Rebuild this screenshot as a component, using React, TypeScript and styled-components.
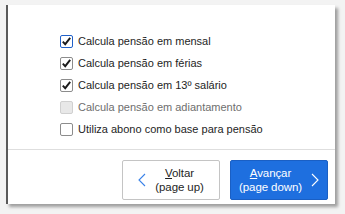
import React from 'react';
import styled, { createGlobalStyle } from 'styled-components';

const GlobalStyle = createGlobalStyle`
    html, body {
        margin: 0;
        padding: 0;
        background: #f3f3f3;
    }
    body {
        font-family: 'Liberation Sans', Arial, sans-serif;
    }
`;

type Option = {
    label: string;
    checked: boolean;
    disabled?: boolean;
    focused?: boolean;
};

const options: Option[] = [
    { label: 'Calcula pensão em mensal', checked: true, focused: true },
    { label: 'Calcula pensão em férias', checked: true },
    { label: 'Calcula pensão em 13º salário', checked: true },
    { label: 'Calcula pensão em adiantamento', checked: false, disabled: true },
    { label: 'Utiliza abono como base para pensão', checked: false },
];

const CheckMark = () => (
    <svg width="11" height="11" viewBox="0 0 11 11">
        <path
            d="M1.8 5.6 L4.2 8.2 L9.2 1.8"
            fill="none"
            stroke="#1b1b1b"
            strokeWidth="1.9"
        />
    </svg>
);

const Chevron = ({ dir, color }: { dir: 'left' | 'right'; color: string }) => (
    <svg width="8" height="14" viewBox="0 0 8 14">
        <polyline
            points={dir === 'left' ? '7,1 1,7 7,13' : '1,1 7,7 1,13'}
            fill="none"
            stroke={color}
            strokeWidth="1.1"
        />
    </svg>
);

const App = () => {
    return (
        <>
            <GlobalStyle />
            <Screen>
                <Window>
                    <OptionList>
                        {options.map((o) => (
                            <OptionRow key={o.label} $disabled={o.disabled}>
                                <Box $focused={o.focused} $disabled={o.disabled}>
                                    {o.checked && <CheckMark />}
                                </Box>
                                <Label>{o.label}</Label>
                            </OptionRow>
                        ))}
                    </OptionList>
                    <Footer>
                        <NavButton>
                            <Chevron dir="left" color="#3a82e8" />
                            <ButtonText>
                                <span>
                                    <u>V</u>oltar
                                </span>
                                <span>(page up)</span>
                            </ButtonText>
                        </NavButton>
                        <NavButton $primary>
                            <ButtonText>
                                <span>
                                    <u>A</u>vançar
                                </span>
                                <span>(page down)</span>
                            </ButtonText>
                            <Chevron dir="right" color="#ffffff" />
                        </NavButton>
                    </Footer>
                </Window>
            </Screen>
        </>
    );
};

const Screen = styled.div`
    width: 345px;
    height: 214px;
    padding: 5px 0 0 6px;
    box-sizing: border-box;
`;

const Window = styled.div`
    width: 329px;
    height: 199px;
    box-sizing: border-box;
    background: #ffffff;
    border-left: 2px solid #5a5a5a;
    box-shadow: 3px 3px 3px rgba(0, 0, 0, 0.35);
    display: flex;
    flex-direction: column;
`;

const OptionList = styled.div`
    height: 145px;
    box-sizing: border-box;
    padding: 25px 0 0 52px;
    border-bottom: 1px solid #dedede;
    display: flex;
    flex-direction: column;
`;

const OptionRow = styled.div<{ $disabled?: boolean }>`
    height: 22px;
    display: flex;
    align-items: center;
    gap: 5px;
    color: ${(p) => (p.$disabled ? '#6e6e6e' : '#1e1e1e')};
`;

const Box = styled.div<{ $focused?: boolean; $disabled?: boolean }>`
    width: 13px;
    height: 13px;
    box-sizing: border-box;
    border: 1px solid
        ${(p) => (p.$focused ? '#2060c8' : p.$disabled ? '#d0d0d0' : '#8c8c8c')};
    border-radius: 2px;
    background: ${(p) => (p.$disabled ? '#e8e8e8' : '#ffffff')};
    display: flex;
    align-items: center;
    justify-content: center;
`;

const Label = styled.span`
    font-size: 11px;
    line-height: 13px;
    padding-top: 1px;
`;

const Footer = styled.div`
    flex: 1;
    display: flex;
    justify-content: flex-end;
    align-items: flex-start;
    gap: 10px;
    padding: 10px 7px 0 0;
`;

const NavButton = styled.button<{ $primary?: boolean }>`
    width: 98px;
    height: 40px;
    box-sizing: border-box;
    border: 1px solid ${(p) => (p.$primary ? '#1a5fc4' : '#c4c4c4')};
    border-radius: 2px;
    background: ${(p) => (p.$primary ? '#1e6fdf' : '#ffffff')};
    color: ${(p) => (p.$primary ? '#ffffff' : '#1e1e1e')};
    display: flex;
    align-items: center;
    justify-content: center;
    gap: 9px;
    padding: 0;
    font-family: 'Liberation Sans', Arial, sans-serif;
    cursor: pointer;
`;

const ButtonText = styled.span`
    display: flex;
    flex-direction: column;
    align-items: center;
    font-size: 11.5px;
    letter-spacing: -0.1px;
    line-height: 14px;

    u {
        text-decoration-thickness: 1px;
        text-underline-offset: 1px;
    }
`;

export default App;
